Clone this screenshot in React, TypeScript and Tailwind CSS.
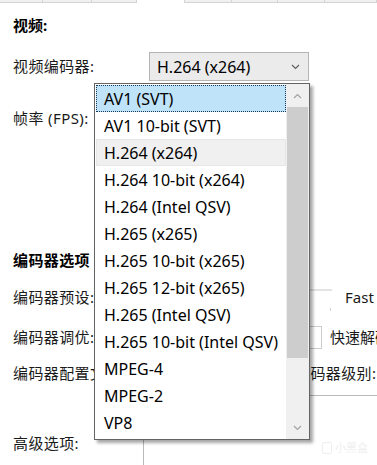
import React from "react";

const ui = { fontFamily: '"Noto Sans", "Noto Sans CJK SC", sans-serif' };

const codecs = [
  "AV1 (SVT)",
  "AV1 10-bit (SVT)",
  "H.264 (x264)",
  "H.264 10-bit (x264)",
  "H.264 (Intel QSV)",
  "H.265 (x265)",
  "H.265 10-bit (x265)",
  "H.265 12-bit (x265)",
  "H.265 (Intel QSV)",
  "H.265 10-bit (Intel QSV)",
  "MPEG-4",
  "MPEG-2",
  "VP8",
];

const tabs = [43, 49, 45, 48, 47, 46, 47, 52];

function Chevron({ up = false, color = "#606060" }: { up?: boolean; color?: string }) {
  return (
    <svg width="9" height="6" viewBox="0 0 9 6" fill="none">
      <polyline
        points={up ? "1,5 4.5,1.5 8,5" : "1,1 4.5,4.5 8,1"}
        stroke={color}
        strokeWidth="1.2"
      />
    </svg>
  );
}

function Row({ label, children, className = "" }: { label: string; children?: React.ReactNode; className?: string }) {
  return (
    <div className={`flex items-center h-[28px] ${className}`}>
      <span className="w-[143px] shrink-0 pl-[13px] text-[15px] tracking-[0.4px] text-[#1a1a1a] whitespace-nowrap overflow-hidden">
        {label}
      </span>
      {children}
    </div>
  );
}

export default function App() {
  return (
    <div className="relative w-[377px] h-[465px] overflow-hidden bg-white" style={ui}>
      {/* tab strip */}
      <div className="flex h-[3px]">
        {tabs.map((w, i) => (
          <div
            key={i}
            style={{ width: w }}
            className={
              i === 3
                ? "bg-white border-r border-[#d4d4d4]"
                : "bg-[#f0f0f0] border-r border-b border-[#d4d4d4]"
            }
          />
        ))}
      </div>

      <div className="mt-[8px] h-[28px] flex items-center pl-[13px] text-[15px] font-bold text-black">视频:</div>

      <div className="mt-[13px] flex items-center h-[29px]">
        <span className="w-[149px] shrink-0 pl-[13px] text-[15px] tracking-[0.4px] text-[#1a1a1a]">视频编码器:</span>
        <div className="w-[160px] h-[29px] flex items-center justify-between pl-[7px] pr-[8px] border border-[#b5b5b5] bg-[#ebebeb] text-[16px] text-black">
          <span>H.264 (x264)</span>
          <Chevron />
        </div>
      </div>

      <Row label="帧率 (FPS):" className="mt-[23px]" />

      <div className="mt-[114px] h-[28px] flex items-center pl-[13px] text-[15px] font-bold tracking-[0.4px] text-black">编码器选项</div>

      <Row label="编码器预设:" className="mt-[9px]">
        <div className="w-[189px] h-full flex flex-col">
          <div className="mt-[6px] h-[3px] bg-[#e4e4e4]" />
          <div className="mt-[17px] flex justify-end pr-[1px]">
            <div className="w-[1px] h-[3px] bg-[#d0d0d0]" />
          </div>
        </div>
        <span className="ml-[13px] text-[15px] text-[#1a1a1a]">Fast</span>
      </Row>

      <Row label="编码器调优:" className="mt-[12px]">
        <div className="w-[179px] h-[23px] shrink-0 border border-[#cccccc] bg-white" />
        <span className="ml-[8px] text-[15px] text-[#1a1a1a] whitespace-nowrap">快速解码</span>
      </Row>

      <Row label="编码器配置文件:" className="mt-[8px]">
        <span className="ml-[152px] text-[15px] tracking-[0.4px] text-[#1a1a1a] whitespace-nowrap">编码器级别:</span>
      </Row>

      <div className="mt-[8px] flex items-center h-[96px]">
        <span className="w-[143px] shrink-0 pl-[13px] text-[15px] tracking-[0.4px] text-[#1a1a1a]">高级选项:</span>
        <div className="h-full w-[260px] shrink-0 border border-[#b9b9b9] bg-white" />
      </div>

      {/* watermark */}
      <div className="absolute left-[322px] top-[440px] flex items-center gap-[3px] text-[11px] text-[#efefef]">
        <span className="w-[10px] h-[12px] rounded-[2px] border border-[#efefef]" />
        <span>小黑盒</span>
      </div>

      {/* open dropdown list */}
      <div className="absolute left-[94px] top-[83px] w-[216px] h-[357px] flex border border-[#646464] bg-white shadow-[3px_3px_3px_rgba(0,0,0,0.35)]">
        <div className="flex-1 flex flex-col pt-[1px] pl-[1px]">
          {codecs.map((c, i) => (
            <div
              key={c}
              className={
                "h-[27px] shrink-0 flex items-center pl-[7px] text-[16px] text-black whitespace-nowrap " +
                (i === 0
                  ? "bg-[#bfe3f8] border border-dotted border-[#1a3a5a]"
                  : i === 2
                  ? "bg-[#f0f0f0] border border-[#e6e6e6]"
                  : "border border-transparent")
              }
            >
              {c}
            </div>
          ))}
        </div>
        <div className="w-[23px] flex flex-col bg-[#f0f0f0]">
          <div className="h-[23px] flex items-center justify-center">
            <Chevron up color="#a3a3a3" />
          </div>
          <div className="h-[251px] mx-[1px] bg-[#cdcdcd]" />
          <div className="flex-1" />
          <div className="h-[22px] flex items-center justify-center">
            <Chevron color="#a3a3a3" />
          </div>
        </div>
      </div>
    </div>
  );
}
